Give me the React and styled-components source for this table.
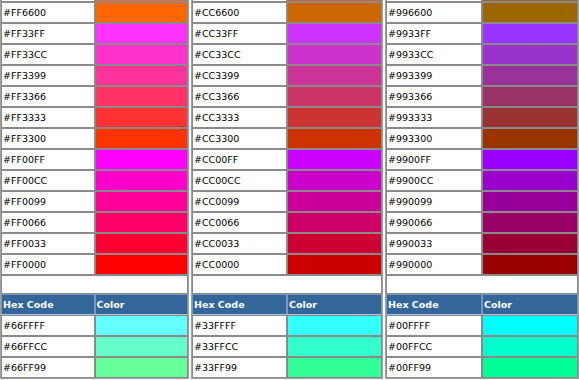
import React from "react";
import styled, { createGlobalStyle } from "styled-components";

const GlobalStyle = createGlobalStyle`
    html, body {
        margin:0;
        padding:0;
        background:#fff;
        overflow:hidden;
    }
    body {
        font-family:"DejaVu Sans", Verdana, sans-serif;
    }
`

const Page = styled.div`
    display:grid;
    grid-template-columns: 189px 192px 194px;
    column-gap:2px;
    align-items:start;
    margin-top:-20px;
`

const Table = styled.table`
    width:100%;
    border-collapse:separate;
    border-spacing:0;
    border:1px solid #a0a0a0;
    table-layout:fixed;
`

const Cell = styled.td`
    height:19px;
    padding:0 1px;
    border:1px solid #8a8a8a;
    font-size:9.5px;
    color:#000;
    vertical-align:middle;
    white-space:nowrap;
    background:${({ $color }) => $color || "#fff"};
`

const Blank = styled.td`
    height:17px;
    padding:0;
    border:1px solid #8a8a8a;
    background:#fff;
`

const Head = styled.th`
    height:19px;
    padding:0 1px;
    border:1px solid #7d98b6;
    border-bottom-color:#a9c6e0;
    background:#336699;
    color:#fff;
    font-size:9.5px;
    font-weight:700;
    text-align:left;
    vertical-align:middle;
`

const tables = [
    { prefix: "FF", next: "66" },
    { prefix: "CC", next: "33" },
    { prefix: "99", next: "00" },
]

const upper = ["6600", "33FF", "33CC", "3399", "3366", "3333", "3300", "00FF", "00CC", "0099", "0066", "0033", "0000"]
const lower = ["FFFF", "FFCC", "FF99"]

// row scrolled off the top of the page, only its bottom edge shows
const ColorRow = ({ hex, hidden }) => (
    <tr>
        <Cell>{hidden ? "" : hex}</Cell>
        <Cell $color={hex} />
    </tr>
)

const ColorTable = ({ prefix, next }) => {
    return (
        <Table>
            <tbody>
                <ColorRow hex={`#${prefix}6633`} hidden />
                {upper.map((code) => (
                    <ColorRow key={code} hex={`#${prefix}${code}`} />
                ))}
                <tr>
                    <Blank colSpan={2} />
                </tr>
                <tr>
                    <Head>Hex Code</Head>
                    <Head>Color</Head>
                </tr>
                {lower.map((code) => (
                    <ColorRow key={code} hex={`#${next}${code}`} />
                ))}
            </tbody>
        </Table>
    )
}

const App = () => {
    return (
        <>
            <GlobalStyle />
            <Page>
                {tables.map((t) => (
                    <ColorTable key={t.prefix} prefix={t.prefix} next={t.next} />
                ))}
            </Page>
        </>
    )
}

export default App
